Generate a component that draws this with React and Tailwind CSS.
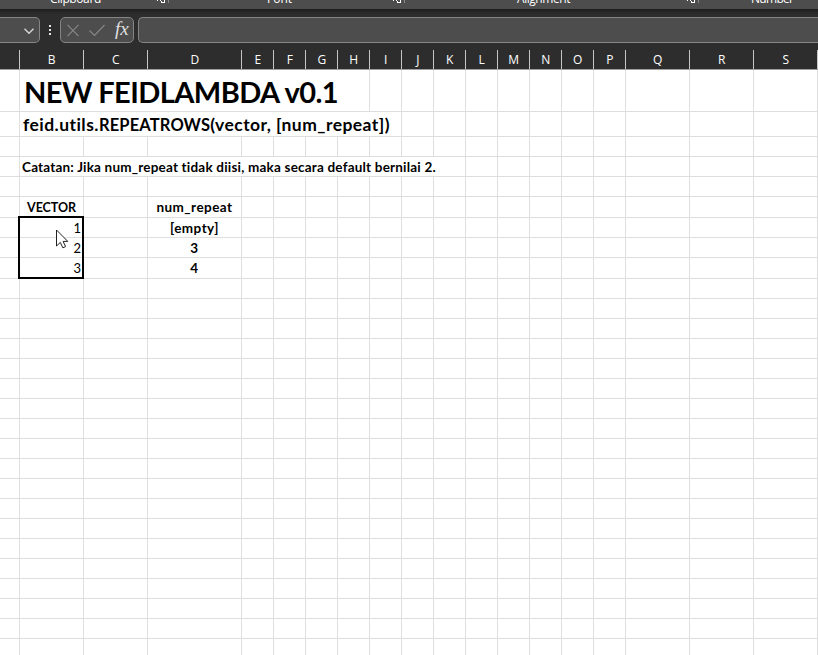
const columns = [
  ['', 20], ['B', 64], ['C', 64], ['D', 94], ['E', 32], ['F', 32], ['G', 32],
  ['H', 32], ['I', 32], ['J', 32], ['K', 32], ['L', 32], ['M', 32], ['N', 32],
  ['O', 32], ['P', 32], ['Q', 64], ['R', 64], ['S', 64],
];

const rowHeights = [42, 25, 20, 20, 20, 21, 20, 20, 21, ...Array(19).fill(20)];

// Last column that long text spills into, per row.
const spill = { 0: 6, 1: 7, 3: 9 };

const cells = {
  '0-1': <span className="absolute left-[4px] top-[2px] text-[29px] leading-[40px] font-bold tracking-[-0.55px] whitespace-nowrap">NEW FEIDLAMBDA v0.1</span>,
  '1-1': (
    <span className="absolute left-[3px] top-[1px] text-[17.5px] leading-[24px] font-bold tracking-[0.45px] whitespace-nowrap">
      feid.utils.<span className="text-[16.5px] tracking-[0.15px]">REPEATROWS</span>(vector, [num_repeat])
    </span>
  ),
  '3-1': <span className="absolute left-[2px] top-0 text-[13.5px] leading-[20px] font-bold tracking-[0.2px] whitespace-nowrap">Catatan: Jika num_repeat tidak diisi, maka secara default bernilai 2.</span>,
  '5-1': <Centered><span className="text-[12.5px] tracking-[-0.05px]">VECTOR</span></Centered>,
  '5-3': <Centered>num_repeat</Centered>,
  '6-1': <Value>1</Value>,
  '7-1': <Value>2</Value>,
  '8-1': <Value>3</Value>,
  '6-3': <Centered>[empty]</Centered>,
  '7-3': <Centered>3</Centered>,
  '8-3': <Centered>4</Centered>,
};

function Centered({ children }) {
  return <div className="text-center text-[13.5px] leading-[20px] font-bold tracking-[0.45px]">{children}</div>;
}

function Value({ children }) {
  return <div className="pr-[2px] text-right text-[13px] leading-[20px]">{children}</div>;
}

function Launcher() {
  return (
    <svg className="h-[4px] w-[13px]" viewBox="0 0 13 4" shapeRendering="crispEdges" fill="#fff">
      <path d="M0 0h1v1H0zM3 0h1v1H3zM4 1h1v1H4zM7 0h1v3H4V2h3V0z" />
      <path fill="#858585" d="M11 0h1v3h-1z" />
    </svg>
  );
}

function Ribbon() {
  const label = 'block -mt-[10px] text-[12px] leading-[18px] text-white whitespace-nowrap';
  return (
    <div className="flex h-[9px] overflow-hidden bg-[#4d4d4d] font-['Open_Sans',sans-serif]">
      <div className="w-[157px] pl-[50px]"><span className={label + ' w-[51px] tracking-[-0.4px]'}>Clipboard</span></div>
      <Launcher />
      <div className="w-[223px] pl-[97px]"><span className={label}>Font</span></div>
      <Launcher />
      <div className="w-[281px] pl-[111px]"><span className={label + ' tracking-[-0.45px]'}>Alignment</span></div>
      <Launcher />
      <div className="pl-[51px]"><span className={label + ' tracking-[-0.7px]'}>Number</span></div>
    </div>
  );
}

function FormulaBar() {
  return (
    <div className="flex h-[41px] bg-[linear-gradient(#1e1e1e,#2d2d2d_5px)] pt-[8px]">
      <div className="flex h-[26px] w-[40px] justify-end rounded-r-[5px] border border-l-0 border-[#858585] bg-[#4d4d4d] pr-[4px] pt-[9px]">
        <svg width="12" height="8" viewBox="0 0 12 8" fill="none" stroke="#d6d6d6" strokeWidth="1.4"><path d="M1.5 1.8 6 6.2l4.500-4.400" /></svg>
      </div>
      <div className="flex h-[26px] w-[20px] flex-col items-center gap-[2px] pt-[8px]">
        <i className="h-[2px] w-[2px] bg-[#e5e5e5]" />
        <i className="h-[2px] w-[2px] bg-[#e5e5e5]" />
        <i className="h-[2px] w-[2px] bg-[#e5e5e5]" />
      </div>
      <div className="flex h-[26px] w-[74px] rounded-[5px] border border-[#858585] bg-[#4d4d4d]">
        <svg className="mt-[6px] ml-[5px]" width="14" height="13" fill="none" stroke="#888" strokeWidth="1.1"><path d="m1.500.8 11 11.400M12.500.8l-11 11.400" /></svg>
        <svg className="mt-[6px] ml-[8px]" width="18" height="13" fill="none" stroke="#888" strokeWidth="1.1"><path d="m1.500 6.500 5 5L16.500 1" /></svg>
        <span className="ml-[9px] mt-[-1px] font-['Liberation_Serif',serif] text-[19px] leading-[24px] italic text-[#e0e0e0]">fx</span>
      </div>
      <div className="ml-[4px] h-[26px] flex-1 rounded-l-[5px] border border-r-0 border-[#858585] bg-[#4d4d4d]" />
    </div>
  );
}

function Row({ row, height }) {
  return (
    <div className="flex shrink-0" style={{ height }}>
      {columns.map(([name, width], col) => {
        const open = col > 0 && col <= (spill[row] ?? 0);
        return (
          <div
            key={name}
            className="relative shrink-0 border-b border-[#dedede]"
            style={{ width, borderRightWidth: open ? 0 : 1 }}
          >
            {cells[row + '-' + col]}
          </div>
        );
      })}
    </div>
  );
}

export default function App() {
  return (
    <div className="h-[655px] w-[818px] overflow-hidden bg-white text-black">
      <Ribbon />
      <FormulaBar />
      <div className="flex h-[20px] border-b border-[#a0a0a0] bg-[#2d2d2d] font-['Open_Sans',sans-serif] text-[12px] leading-[19px] text-white">
        {columns.map(([name, width]) => (
          <div key={name} className="shrink-0 border-r border-[#c6c6c6] pl-[0.5px] text-center" style={{ width }}>{name}</div>
        ))}
      </div>
      <div className="relative flex flex-col font-['Lato',sans-serif] [font-variant-ligatures:none]">
        {rowHeights.map((height, row) => <Row key={row} row={row} height={height} />)}
        <div className="absolute left-[18px] top-[146px] h-[63px] w-[66px] border-2 border-black" />
        <svg className="absolute left-[56px] top-[159px]" width="13" height="21" viewBox="0 0 13 21">
          <path d="M.5 1v16l3.800-3.600 2.500 5.400 2.800-1.200-2.500-5.200h4.700z" fill="#fff" stroke="#222" />
        </svg>
      </div>
    </div>
  );
}
